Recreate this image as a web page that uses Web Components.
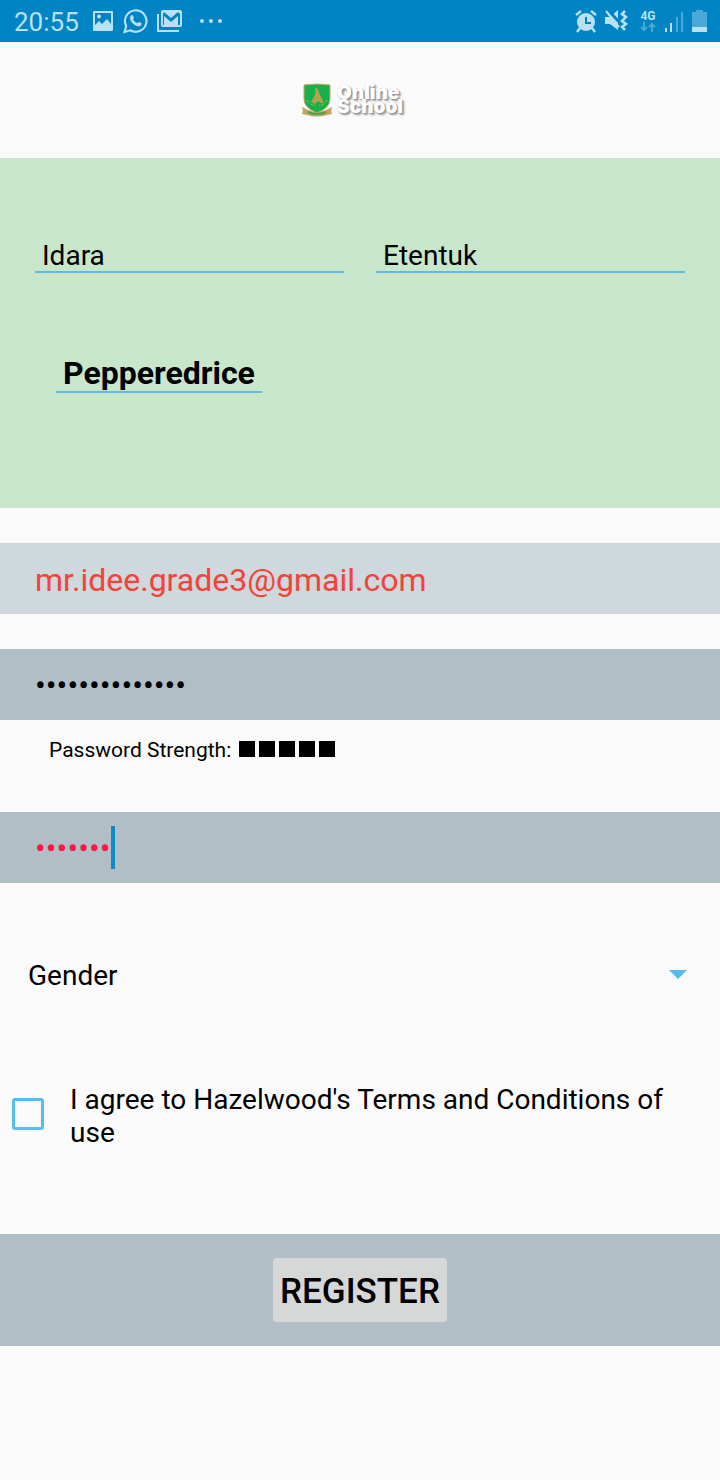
<!DOCTYPE html>
<html lang="en">
<head>
<meta charset="utf-8">
<meta name="viewport" content="width=device-width, initial-scale=1">
<title>Online School – Register</title>
<style>
  body { margin: 0; background: #fafafa; color: #000; font-family: Roboto, "Liberation Sans", sans-serif; font-size: 28px; }
</style>
</head>
<body>
<register-page></register-page>

<template id="status-bar">
  <style>
    :host { display: flex; align-items: center; justify-content: space-between; height: 42px; padding: 0 13px 0 14px; background: #0084c3; color: #b9e1f3; }
    .group { display: flex; align-items: center; }
    svg { display: block; fill: currentColor; }
    time { font-size: 26px; line-height: 32px; margin-right: 13px; padding-top: 2px; }
    .left svg { margin-right: 9px; }
    .net { display: flex; flex-direction: column; align-items: center; font-size: 12px; line-height: 12px; font-weight: 700; margin: 0 9px 0 11px; }
    .dim { opacity: .4; }
  </style>
  <div class="group left">
    <time>20:55</time>
    <svg width="22" height="22" viewBox="0 0 22 22" aria-label="Picture"><path fill-rule="evenodd" d="M2 1h18q1 0 1 1v18q0 1-1 1H2q-1 0-1-1V2q0-1 1-1zM3 3v12l4-4 3 3 5-5 4 5V3z"/><circle cx="7" cy="6.500" r="2"/></svg>
    <svg width="25" height="26" viewBox="0 0 24 24" aria-label="WhatsApp"><path fill="none" stroke="currentColor" stroke-width="2" d="M1.500 22.500l1.600-5.700A10.300 10.300 0 1 1 7 20.900z"/><path d="M8 6.500c.5-.5 1.200-.4 1.500.2l.9 2c.2.500-.8 1.300-.8 1.700.8 1.700 2.200 3 4 3.700.5 0 1.200-1.400 1.700-1.200l2.200 1.100c.6.300.3 1.600-.3 2.200-1.700 1.700-4.600.7-7-1.200-2.600-2.100-4.800-6.300-2.200-8.500z"/></svg>
    <svg width="26" height="24" viewBox="0 0 26 24" aria-label="Mail"><path d="M0 5h2v16h20v2H0z"/><path fill-rule="evenodd" d="M6 1h17q2 0 2 2v13q0 2-2 2H6q-2 0-2-2V3q0-2 2-2zM6 5v11h1V7l7 6 7-6v9h2V5l-2-2-7 6-7-6z"/></svg>
    <svg width="34" height="6" viewBox="0 0 34 6" aria-label="More"><circle cx="10" cy="3" r="2"/><circle cx="19" cy="3" r="2"/><circle cx="28" cy="3" r="2"/></svg>
  </div>
  <div class="group">
    <svg width="24" height="24" viewBox="0 0 24 24" aria-label="Alarm"><circle cx="12" cy="13" r="9"/><path fill="none" stroke="currentColor" stroke-width="2.500" d="M2 6l5-4M22 6l-5-4M6 19l-3 4M18 19l3 4"/><path fill="none" stroke="#0084c3" stroke-width="2" d="M12 8v6h5"/></svg>
    <svg width="25" height="24" viewBox="0 0 25 24" aria-label="Vibrate" style="margin-left:6px"><path d="M1 8h5l8-7v20l-8-6H1z"/><path fill="none" stroke="#0084c3" stroke-width="3" d="M4 1l13 14"/><path fill="none" stroke="currentColor" stroke-width="2" d="M2 2l13 16"/><path fill="none" stroke="currentColor" stroke-width="2.500" d="M21 2l-3 3 4 3-4 4 4 3-4 3 3 3"/></svg>
    <div class="net"><span>4G</span>
      <svg class="dim" width="16" height="10" viewBox="0 0 16 10"><path fill="none" stroke="currentColor" stroke-width="2" d="M4 0v8M1 5l3 3 3-3M12 10V2M9 5l3-3 3 3"/></svg></div>
    <svg width="18" height="21" viewBox="0 0 18 21" aria-label="Signal"><path d="M0 17h2v4H0zM5 12h2v9H5z"/><path class="dim" d="M11 6h2v15h-2zM16 1h2v20h-2z"/></svg>
    <svg width="15" height="22" viewBox="0 0 15 22" aria-label="Battery" style="margin-left:9px"><path class="dim" d="M4 0h7v2h4v15H0V2h4z"/><path d="M0 17h15v5H0z"/></svg>
  </div>
</template>

<template id="school-logo">
  <style>
    :host { display: flex; align-items: center; justify-content: center; height: 116px; padding-right: 16px; gap: 4px; }
    svg { display: block; }
    .name { width: min-content; font: 900 19px/14px Inter, sans-serif; color: #fff; text-shadow: 1px 1px 1px #999, 2px 2px 2px #999, 0 0 1px #ccc; }
  </style>
  <svg width="32" height="34" viewBox="0 0 32 34" role="img" aria-label="School crest">
    <path fill="#18b04d" stroke="#c9a766" d="M3 2q13-2 26 0v14q0 9-13 14Q3 25 3 16z"/>
    <path fill="#b4a14e" d="M14 4q4 2 4 6l4 8q1 3-2 2l-3-2-3 3-4-2 3-5q2-4 1-10z"/>
    <path fill="none" stroke="#a6b85a" stroke-width="1" stroke-dasharray="2 1" d="M6 17q3 6 8 5M26 17q-3 6-8 5"/>
    <path fill="#c9a05b" d="M1 24l6 3q9 4 18 0l6-3-1 4 1 3-5 1q-10 3-20 0l-5-1 1-3z"/>
    <path fill="none" stroke="#3da64d" stroke-width="2" d="M7 29q9 4 18 0"/>
  </svg>
  <div class="name">Online School</div>
</template>

<template id="line-field">
  <style>
    :host { display: block; min-width: 0; }
    input { display: block; box-sizing: border-box; width: 100%; height: 34px; margin: 0; padding: 0 7px; border: 0; border-bottom: 2px solid #5bbbe1; border-radius: 0; background: none; outline: 0; color: inherit; font: inherit; line-height: 32px; }
    :host([strong]) input { width: auto; height: 38px; field-sizing: content; font-size: 32px; font-weight: 700; line-height: 36px; }
  </style>
  <input type="text">
</template>

<template id="band-field">
  <style>
    :host { display: flex; align-items: center; height: 71px; padding: 0 35px; background: #b0bec5; font-size: 32px; }
    input { flex: 1; min-width: 0; margin: 0; padding: 2px 0 0; border: 0; background: none; outline: 0; color: inherit; font: inherit; line-height: 38px; }
    i { display: none; width: 4px; height: 43px; background: #0d8bc8; }
    :host([type="password"]) input { padding: 0; }
    :host([active]) input { flex: none; field-sizing: content; }
    :host([active]) i { display: block; }
  </style>
  <input><i></i>
</template>

<template id="strength-meter">
  <style>
    :host { display: flex; align-items: center; gap: 4px; padding: 0 49px; font-size: 21px; line-height: 26px; }
    span { margin-right: 4px; padding-top: 2px; }
    i { width: 16px; height: 16px; background: #000; }
  </style>
  <span><slot></slot></span><i></i><i></i><i></i><i></i><i></i>
</template>

<template id="gender-picker">
  <style>
    :host { display: grid; align-items: center; padding: 0 28px; }
    select, svg { grid-area: 1 / 1; }
    select { appearance: none; width: 100%; height: 48px; margin: 0; padding: 0; border: 0; background: none; color: inherit; font: inherit; }
    svg { justify-self: end; margin-right: 4px; pointer-events: none; }
  </style>
  <select aria-label="Gender"><option>Gender</option><option>Female</option><option>Male</option></select>
  <svg width="20" height="10" viewBox="0 0 20 10"><path fill="#55bbea" d="M1 0h18l-9 9z"/></svg>
</template>

<template id="terms-check">
  <style>
    :host { display: block; padding: 0 35px 0 12px; }
    label { display: flex; align-items: center; gap: 26px; line-height: 33px; }
    span { padding-top: 4px; }
    input { appearance: none; flex: none; box-sizing: border-box; width: 32px; height: 32px; margin: 0; border: 3px solid #58bcec; border-radius: 3px; }
    input:checked { background: #58bcec; }
  </style>
  <label><input type="checkbox"><span><slot></slot></span></label>
</template>

<template id="submit-bar">
  <style>
    :host { display: flex; align-items: center; justify-content: center; height: 112px; background: #b0bec5; }
    button { height: 64px; margin: 0; padding: 3px 7px 0; border: 0; border-radius: 4px; background: #d6d7d7; color: #000; font: inherit; font-size: 35px; font-weight: 500; line-height: 42px; }
  </style>
  <button type="submit"><slot></slot></button>
</template>

<template id="register-page">
  <style>
    :host { display: block; }
    .names { box-sizing: border-box; min-height: 350px; padding: 81px 35px 0; background: #c8e6c9; }
    .row { display: grid; grid-template-columns: 1fr 1fr; column-gap: 32px; }
    .user { margin: 82px 21px 0; }
    .mail { margin-top: 35px; background: #cfd8dc; color: #f44336; }
    .pass { margin-top: 35px; }
    .meter { margin-top: 15px; }
    .again { margin-top: 49px; color: #ff1744; }
    .gender { margin-top: 68px; }
    .terms { margin-top: 80px; }
    .submit { margin-top: 85px; }
  </style>
  <status-bar></status-bar>
  <school-logo></school-logo>
  <main>
    <div class="names">
      <div class="row">
        <line-field label="First name" value="Idara"></line-field>
        <line-field label="Last name" value="Etentuk"></line-field>
      </div>
      <line-field class="user" strong label="Username" value="Pepperedrice"></line-field>
    </div>
    <band-field class="mail" type="email" label="Email" value="mr.idee.grade3@gmail.com"></band-field>
    <band-field class="pass" type="password" label="Password" value="abcdefghijklmn"></band-field>
    <strength-meter class="meter">Password Strength:</strength-meter>
    <band-field class="again" active type="password" label="Confirm password" value="abcdefg"></band-field>
    <gender-picker class="gender"></gender-picker>
    <terms-check class="terms">I agree to Hazelwood's Terms and Conditions of use</terms-check>
    <submit-bar class="submit">REGISTER</submit-bar>
  </main>
</template>

<script>
  class Part extends HTMLElement {
    constructor() {
      super();
      const template = document.getElementById(this.localName);
      this.attachShadow({ mode: 'open' }).append(template.content.cloneNode(true));
    }
  }
  class Field extends Part {
    connectedCallback() {
      const input = this.shadowRoot.querySelector('input');
      if (this.hasAttribute('type')) input.type = this.getAttribute('type');
      input.setAttribute('aria-label', this.getAttribute('label'));
      input.value = this.getAttribute('value');
    }
  }
  customElements.define('status-bar', class extends Part {});
  customElements.define('school-logo', class extends Part {});
  customElements.define('line-field', class extends Field {});
  customElements.define('band-field', class extends Field {});
  customElements.define('strength-meter', class extends Part {});
  customElements.define('gender-picker', class extends Part {});
  customElements.define('terms-check', class extends Part {});
  customElements.define('submit-bar', class extends Part {});
  customElements.define('register-page', class extends Part {});
</script>
</body>
</html>
